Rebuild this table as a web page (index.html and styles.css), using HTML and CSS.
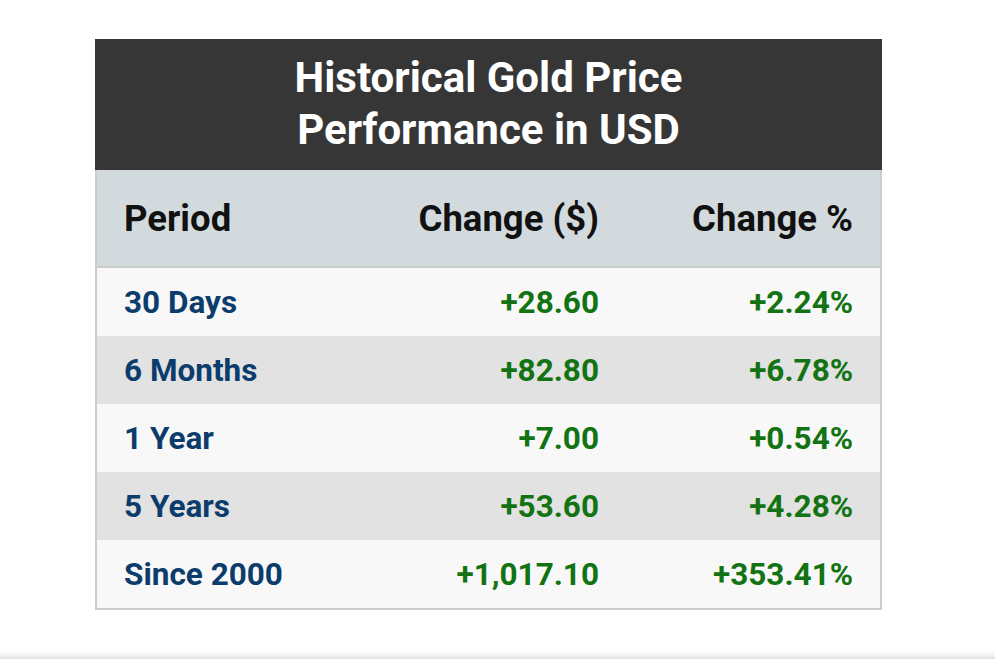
FILE: index.html
```html
<!DOCTYPE html>
<html lang="en">
<head>
<meta charset="utf-8">
<title>Historical Gold Price Performance in USD</title>
<link rel="stylesheet" href="styles.css">
</head>
<body>
<div class="page">
  <div class="card">
    <div class="title">Historical Gold Price<br>Performance in USD</div>
    <div class="body">
      <div class="row head">
        <div class="c1">Period</div>
        <div class="c2">Change ($)</div>
        <div class="c3">Change %</div>
      </div>
      <div class="row odd">
        <div class="c1 period">30 Days</div>
        <div class="c2 up">+28.60</div>
        <div class="c3 up">+2.24%</div>
      </div>
      <div class="row even">
        <div class="c1 period">6 Months</div>
        <div class="c2 up">+82.80</div>
        <div class="c3 up">+6.78%</div>
      </div>
      <div class="row odd">
        <div class="c1 period">1 Year</div>
        <div class="c2 up">+7.00</div>
        <div class="c3 up">+0.54%</div>
      </div>
      <div class="row even">
        <div class="c1 period">5 Years</div>
        <div class="c2 up">+53.60</div>
        <div class="c3 up">+4.28%</div>
      </div>
      <div class="row odd last">
        <div class="c1 period">Since 2000</div>
        <div class="c2 up">+1,017.10</div>
        <div class="c3 up">+353.41%</div>
      </div>
    </div>
  </div>
  <div class="shade"></div>
</div>
</body>
</html>
```
FILE: styles.css
```css
html, body {
  margin: 0;
  padding: 0;
  background: #ffffff;
}
body {
  font-family: Roboto, "Liberation Sans", Arial, sans-serif;
  font-weight: 700;
}
.page {
  width: 995px;
  height: 659px;
  overflow: hidden;
  display: flex;
  flex-direction: column;
}
.card {
  margin: 39px 0 0 95px;
  width: 787px;
}
.title {
  background: #363636;
  color: #ffffff;
  text-align: center;
  font-size: 42px;
  line-height: 52px;
  padding: 13px 0 14px;
  height: 104px;
}
.body {
  border: 2px solid #cccccc;
  border-top: 0;
}
.row {
  display: grid;
  grid-template-columns: 272px 258px 1fr;
  align-items: center;
  height: 68px;
  font-size: 31.5px;
}
.row > div {
  padding: 0 28px 0 27px;
}
.row > .c3 { padding-right: 27px; }
.c2, .c3 { text-align: right; }
.head {
  background: #d3dadd;
  height: 96px;
  border-bottom: 2px solid #cccccc;
  color: #111111;
  font-size: 36.5px;
}
.odd { background: #f8f8f8; }
.even { background: #e2e2e2; }
.period { color: #0c3c6c; }
.up { color: #137313; }
.shade {
  margin-top: auto;
  height: 8px;
  background: linear-gradient(#ffffff, #e4e4e4);
}
```
